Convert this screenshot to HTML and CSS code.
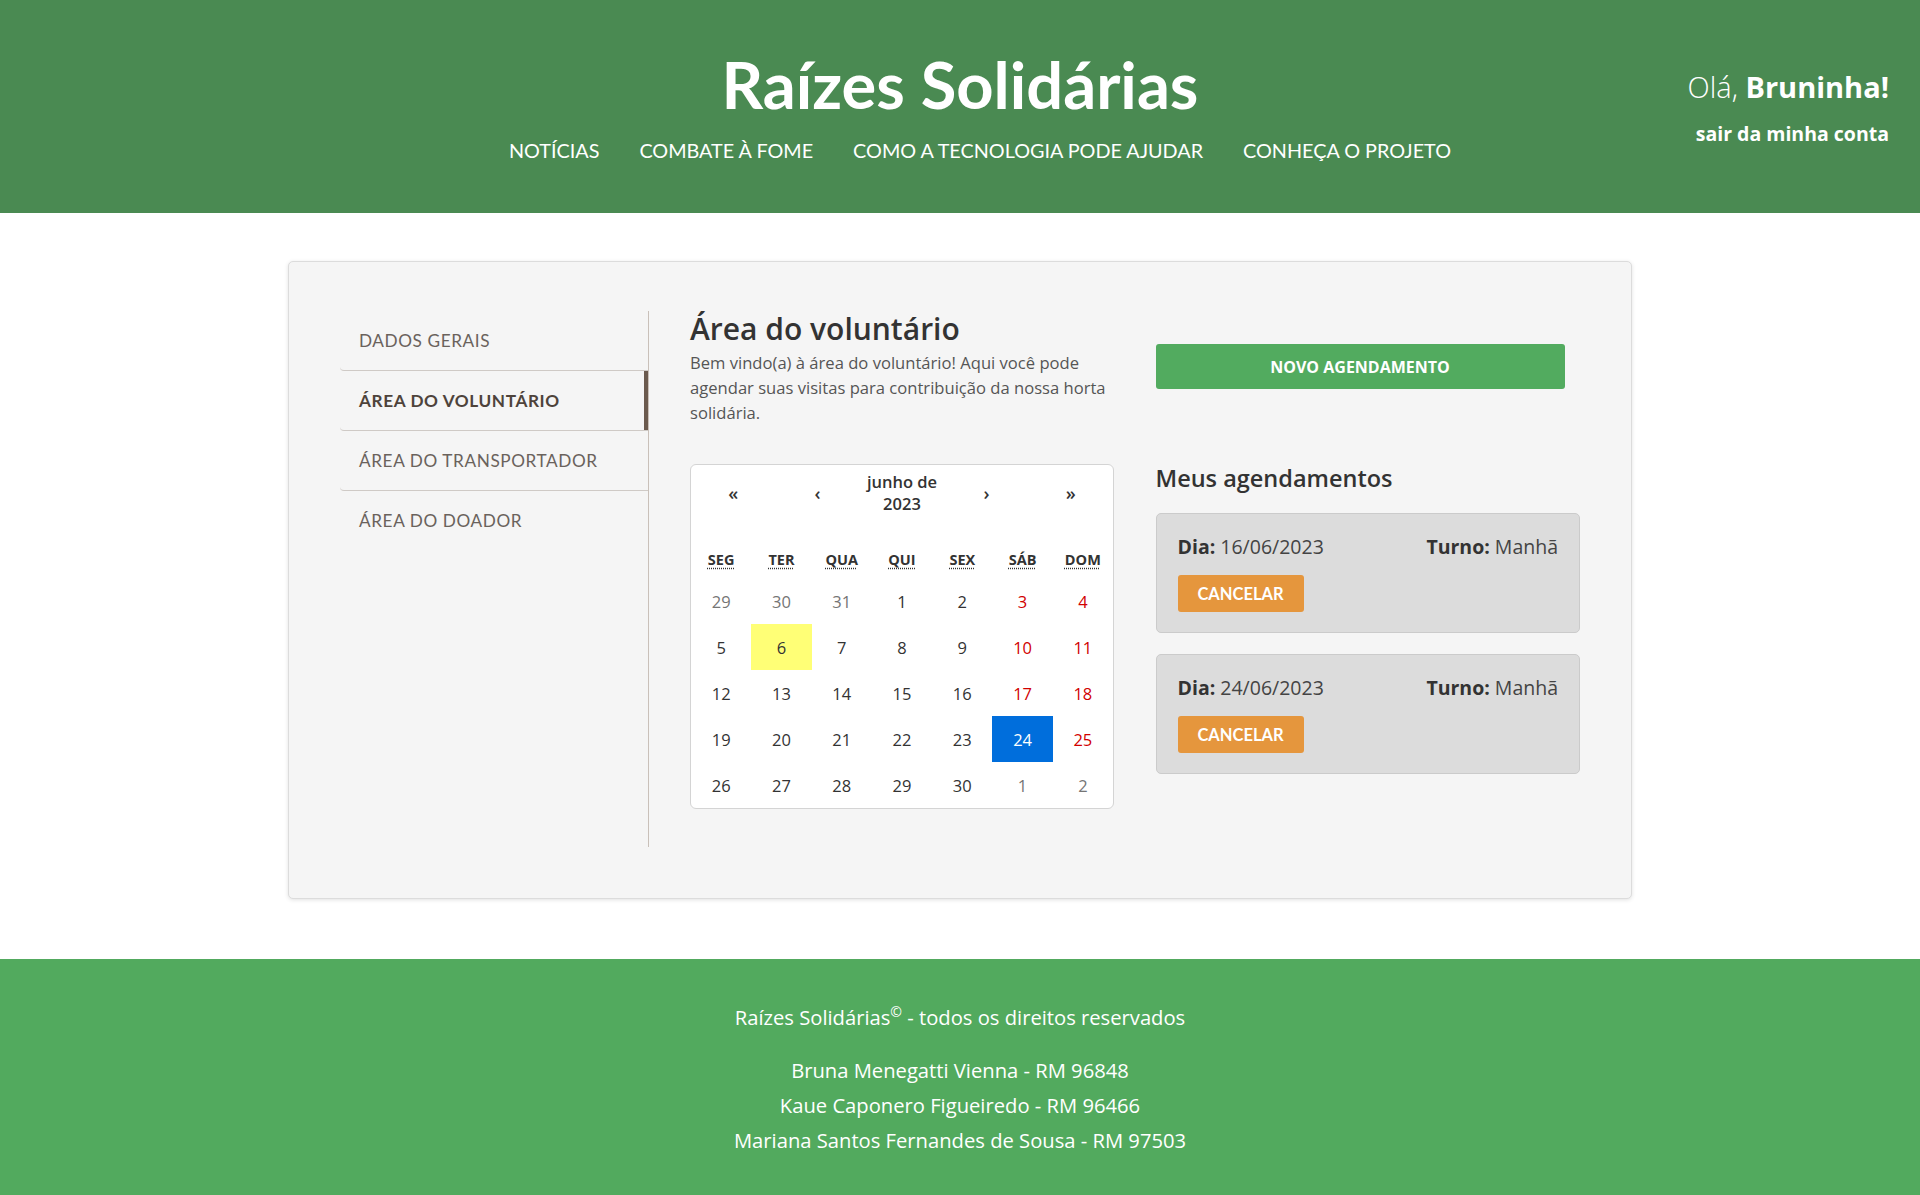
FILE: index.html
```html
<!DOCTYPE html>
<html lang="pt-BR">
<head>
<meta charset="utf-8">
<title>Raízes Solidárias - Área do voluntário</title>
<link rel="stylesheet" href="styles.css">
</head>
<body>
<header class="topbar">
  <div class="brand">
    <h1 class="brand-title">Raízes Solidárias</h1>
    <nav class="main-nav">
      <a href="#">NOTÍCIAS</a>
      <a href="#">COMBATE À FOME</a>
      <a href="#">COMO A TECNOLOGIA PODE AJUDAR</a>
      <a href="#">CONHEÇA O PROJETO</a>
    </nav>
  </div>
  <div class="user">
    <p class="greet">Olá, <strong>Bruninha!</strong></p>
    <a class="logout" href="#">sair da minha conta</a>
  </div>
</header>

<main class="page">
  <section class="panel">
    <aside class="side">
      <a class="side-item" href="#">DADOS GERAIS</a>
      <a class="side-item active" href="#">ÁREA DO VOLUNTÁRIO</a>
      <a class="side-item" href="#">ÁREA DO TRANSPORTADOR</a>
      <a class="side-item" href="#">ÁREA DO DOADOR</a>
    </aside>
    <div class="content">
      <div class="col-left">
        <h2 class="title">Área do voluntário</h2>
        <p class="intro">Bem vindo(a) à área do voluntário! Aqui você pode agendar suas visitas para contribuição da nossa horta solidária.</p>
        <div class="calendar">
          <div class="cal-nav">
            <button class="cal-btn">«</button>
            <button class="cal-btn">‹</button>
            <span class="cal-label">junho de<br>2023</span>
            <button class="cal-btn">›</button>
            <button class="cal-btn">»</button>
          </div>
          <div class="cal-week">
            <abbr title="segunda-feira">SEG</abbr>
            <abbr title="terça-feira">TER</abbr>
            <abbr title="quarta-feira">QUA</abbr>
            <abbr title="quinta-feira">QUI</abbr>
            <abbr title="sexta-feira">SEX</abbr>
            <abbr title="sábado">SÁB</abbr>
            <abbr title="domingo">DOM</abbr>
          </div>
          <div class="cal-days">
            <span class="day other">29</span><span class="day other">30</span><span class="day other">31</span><span class="day">1</span><span class="day">2</span><span class="day wknd">3</span><span class="day wknd">4</span>
            <span class="day">5</span><span class="day today">6</span><span class="day">7</span><span class="day">8</span><span class="day">9</span><span class="day wknd">10</span><span class="day wknd">11</span>
            <span class="day">12</span><span class="day">13</span><span class="day">14</span><span class="day">15</span><span class="day">16</span><span class="day wknd">17</span><span class="day wknd">18</span>
            <span class="day">19</span><span class="day">20</span><span class="day">21</span><span class="day">22</span><span class="day">23</span><span class="day active">24</span><span class="day wknd">25</span>
            <span class="day">26</span><span class="day">27</span><span class="day">28</span><span class="day">29</span><span class="day">30</span><span class="day other">1</span><span class="day other">2</span>
          </div>
        </div>
      </div>
      <div class="col-right">
        <button class="btn-new">NOVO AGENDAMENTO</button>
        <h3 class="subtitle">Meus agendamentos</h3>
        <div class="appt">
          <div class="appt-row">
            <span><b>Dia:</b> 16/06/2023</span>
            <span><b>Turno:</b> Manhã</span>
          </div>
          <button class="btn-cancel">CANCELAR</button>
        </div>
        <div class="appt">
          <div class="appt-row">
            <span><b>Dia:</b> 24/06/2023</span>
            <span><b>Turno:</b> Manhã</span>
          </div>
          <button class="btn-cancel">CANCELAR</button>
        </div>
      </div>
    </div>
  </section>
</main>

<footer class="footer">
  <p class="copy">Raízes Solidárias<sup>©</sup> - todos os direitos reservados</p>
  <ul class="authors">
    <li>Bruna Menegatti Vienna - RM 96848</li>
    <li>Kaue Caponero Figueiredo - RM 96466</li>
    <li>Mariana Santos Fernandes de Sousa - RM 97503</li>
  </ul>
</footer>
</body>
</html>
```

FILE: styles.css
```css
* { box-sizing: border-box; }
html, body { margin: 0; padding: 0; }
body {
  font-family: "Open Sans", "Noto Sans", sans-serif;
  color: #333;
  background: #fff;
}

/* Header */
.topbar {
  height: 213px;
  background: #4a8a52;
  color: #fff;
  display: grid;
  grid-template-columns: 1fr auto 1fr;
  align-items: start;
}
.brand {
  grid-column: 2;
  display: flex;
  flex-direction: column;
  align-items: center;
  padding-top: 45px;
}
.brand-title {
  margin: 0;
  font-family: "Lato", sans-serif;
  font-weight: 700;
  font-size: 65px;
  line-height: 78px;
}
.main-nav {
  display: flex;
  gap: 40px;
  padding-left: 40px;
  margin-top: 15px;
}
.main-nav a {
  color: #fff;
  text-decoration: none;
  font-family: "Lato", sans-serif;
  font-size: 19.8px;
  line-height: 24px;
}
.user {
  grid-column: 3;
  justify-self: end;
  padding-right: 31px;
  padding-top: 67px;
  text-align: right;
}
.greet {
  margin: 0;
  font-size: 29px;
  line-height: 40px;
  font-weight: 300;
}
.greet strong { font-weight: 700; }
.logout {
  display: block;
  margin-top: 14px;
  color: #fff;
  text-decoration: none;
  font-weight: 700;
  font-size: 19.5px;
  line-height: 26px;
}

/* Main */
.page {
  padding: 48px 0 60px;
}
.panel {
  width: 1344px;
  margin: 0 auto;
  background: #f5f5f5;
  border: 1px solid #dcdcdc;
  border-radius: 5px;
  box-shadow: 0 1px 4px rgba(0,0,0,0.12);
  padding: 49px 51px 51px;
  display: grid;
  grid-template-columns: 309px 1fr;
  grid-template-rows: minmax(536px, auto);
  column-gap: 41px;
}
.side {
  border-right: 1px solid #c9c0b9;
  display: flex;
  flex-direction: column;
}
.side-item {
  display: block;
  height: 60px;
  line-height: 59px;
  padding-left: 19px;
  font-family: "Lato", sans-serif;
  font-size: 17.2px;
  letter-spacing: 0.6px;
  color: #6a625c;
  text-decoration: none;
  border-bottom: 1px solid #cfcac6;
  border-bottom-left-radius: 4px;
}
.side-item:last-child { border-bottom: none; }
.side-item.active {
  font-weight: 700;
  color: #4e433b;
  box-shadow: inset -4px 0 0 #6b5a4e;
}

.content {
  display: grid;
  grid-template-columns: 1fr 1fr;
  column-gap: 41px;
  align-items: start;
}
.title {
  margin: 0;
  font-size: 30px;
  line-height: 36px;
  font-weight: 600;
  color: #333;
}
.intro {
  margin: 3px 0 0;
  font-size: 16.6px;
  line-height: 25px;
  color: #555;
}

/* Calendar */
.calendar {
  margin-top: 39px;
  width: 424px;
  background: #fff;
  border: 1px solid #d4d4d4;
  border-radius: 6px;
}
.cal-nav {
  display: grid;
  grid-template-columns: repeat(5, 1fr);
  align-items: center;
  height: 44px;
  margin-top: 6px;
}
.cal-btn {
  background: none;
  border: 0;
  padding: 0;
  font-family: inherit;
  font-size: 18px;
  color: #333;
  font-weight: 600;
  text-align: center;
}
.cal-label {
  text-align: center;
  font-size: 16.5px;
  font-weight: 600;
  line-height: 22px;
  color: #333;
}
.cal-week {
  display: grid;
  grid-template-columns: repeat(7, 1fr);
  height: 37px;
  margin-top: 26px;
  align-items: center;
  text-align: center;
}
.cal-week abbr {
  font-size: 14.5px;
  font-weight: 700;
  color: #333;
  text-decoration: underline dotted;
  text-underline-offset: 3px;
}
.cal-days {
  display: grid;
  grid-template-columns: repeat(7, 1fr);
  grid-auto-rows: 46px;
}
.day {
  display: flex;
  align-items: center;
  justify-content: center;
  font-size: 16.5px;
  color: #333;
}
.day.other { color: #757575; }
.day.wknd { color: #d10000; }
.day.today { background: #ffff76; }
.day.active { background: #006edc; color: #fff; }

/* Right column */
.btn-new {
  display: block;
  width: 409px;
  height: 45px;
  margin-top: 33px;
  background: #52ab5f;
  border: 0;
  border-radius: 3px;
  color: #fff;
  font-family: inherit;
  font-weight: 700;
  font-size: 16px;
}
.subtitle {
  margin: 75px 0 21px;
  font-size: 23.5px;
  line-height: 28px;
  font-weight: 600;
  color: #333;
}
.appt {
  background: #dcdcdc;
  border: 1px solid #cbcbcb;
  border-radius: 5px;
  padding: 19px 21px 20px;
  margin-bottom: 21px;
}
.appt-row {
  display: flex;
  justify-content: space-between;
  font-size: 19.5px;
  line-height: 28px;
  color: #444;
}
.appt-row b { color: #333; font-weight: 700; }
.btn-cancel {
  display: block;
  margin-top: 14px;
  width: 126px;
  height: 37px;
  background: #e5963d;
  border: 0;
  border-radius: 3px;
  color: #fff;
  font-family: "Lato", sans-serif;
  font-weight: 700;
  font-size: 16.5px;
}

/* Footer */
.footer {
  background: #52aa5e;
  color: #fff;
  text-align: center;
  padding: 38px 0 30px;
  min-height: 236px;
}
.copy {
  margin: 0;
  font-size: 20.2px;
  line-height: 30px;
}
.copy sup { font-size: 14px; }
.authors {
  list-style: none;
  margin: 21px 0 0;
  padding: 0;
  font-size: 20.2px;
  line-height: 35px;
}
```
